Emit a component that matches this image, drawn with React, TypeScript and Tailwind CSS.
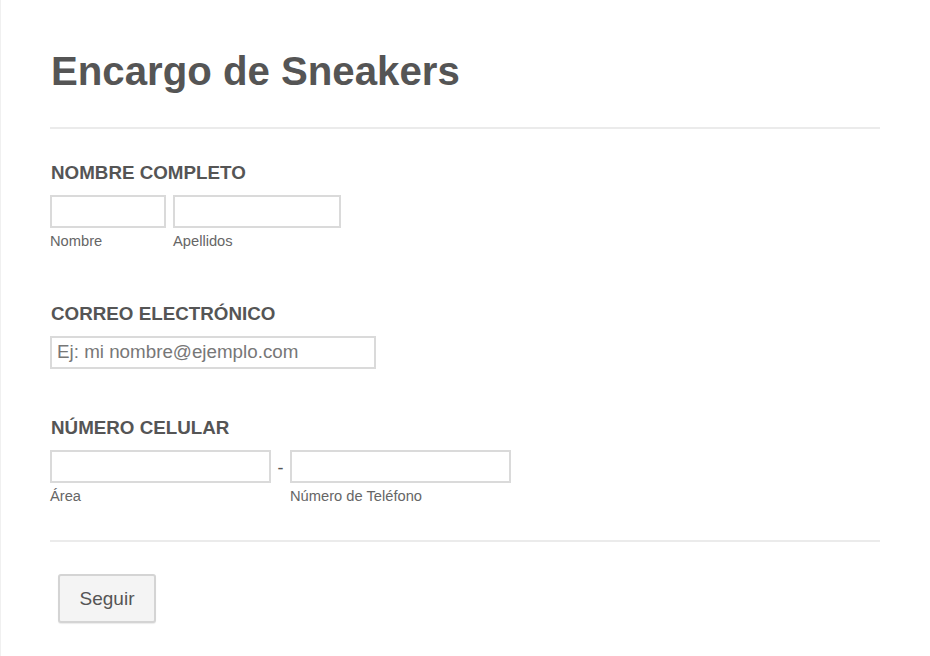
import React from 'react';

const inputCls =
  'h-[33px] border-2 border-[#dadada] bg-white px-[5px] text-[18.8px] text-[#555] outline-none placeholder:text-[#777]';

function Field({ label, gap, children }: { label: string; gap: string; children: React.ReactNode }) {
  return (
    <div>
      <h3 className="pl-px text-[18.8px] font-bold leading-none text-[#555]">{label}</h3>
      <div className={gap}>{children}</div>
    </div>
  );
}

function App() {
  return (
    <div
      className="min-h-[656px] border-l border-[#f0f0f0] bg-white"
      style={{ fontFamily: '"Liberation Sans", Arial, sans-serif' }}
    >
      <div className="ml-[49px] mr-[50px] pt-[48px]">
        <h1 className="pl-px text-[40.2px] font-bold leading-[48px] text-[#555]">Encargo de Sneakers</h1>
        <div className="mt-[31px] border-t-2 border-[#ebebeb]" />

        <div className="mt-[35px]">
          <Field label="NOMBRE COMPLETO" gap="mt-[12px]">
            <div className="flex gap-[7px]">
              <div className="flex flex-col">
                <input className={`${inputCls} w-[116px]`} />
                <span className="mt-[2px] text-[14.7px] text-[#666]">Nombre</span>
              </div>
              <div className="flex flex-col">
                <input className={`${inputCls} w-[168px]`} />
                <span className="mt-[2px] text-[14.7px] text-[#666]">Apellidos</span>
              </div>
            </div>
          </Field>
        </div>

        <div className="mt-[53px]">
          <Field label="CORREO ELECTRÓNICO" gap="mt-[12px]">
            <input className={`${inputCls} w-[326px]`} placeholder="Ej: mi nombre@ejemplo.com" />
          </Field>
        </div>

        <div className="mt-[50px]">
          <Field label="NÚMERO CELULAR" gap="mt-[13px]">
            <div className="flex">
              <div className="flex flex-col">
                <input className={`${inputCls} w-[221px]`} />
                <span className="mt-[2px] text-[14.7px] text-[#666]">Área</span>
              </div>
              <span className="w-[19px] pt-[5px] text-center text-[18px] text-[#555]">-</span>
              <div className="flex flex-col">
                <input className={`${inputCls} w-[221px]`} />
                <span className="mt-[2px] text-[14.7px] text-[#666]">Número de Teléfono</span>
              </div>
            </div>
          </Field>
        </div>

        <div className="mt-[33px] border-t-2 border-[#ebebeb]" />

        <div className="pl-2 pt-[32px]">
          <button className="h-[49px] w-[98px] rounded-[3px] border-2 border-[#d4d4d4] bg-[#f4f4f4] text-[19px] text-[#555] shadow-[0_1px_1px_rgba(0,0,0,0.08)]">
            Seguir
          </button>
        </div>
      </div>
    </div>
  );
}

export default App;
